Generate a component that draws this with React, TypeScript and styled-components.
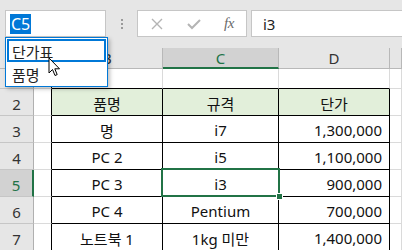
import styled, { createGlobalStyle, css } from 'styled-components';

const GlobalStyle = createGlobalStyle`
  html, body {
    margin: 0;
    padding: 0;
    background: #fff;
  }
  body {
    font-family: "Noto Sans", "Noto Sans CJK KR", sans-serif;
  }
`;

const Screen = styled.div`
  position: relative;
  width: 402px;
  height: 250px;
  overflow: hidden;
  background: #fff;
`;

const FormulaBar = styled.div`
  height: 48px;
  box-sizing: border-box;
  padding: 10px 0 0 5px;
  background: #e6e6e6;
  display: flex;
  align-items: flex-start;
`;

const NameBox = styled.div`
  width: 101px;
  height: 27px;
  box-sizing: border-box;
  border: 1px solid #c6c6c6;
  background: #fff;
  display: flex;
  align-items: center;
  padding-left: 4px;
`;

const Selected = styled.span`
  background: #0078d7;
  color: #fff;
  font-size: 16px;
  line-height: 20px;
  padding: 0 1px;
`;

const Grip = styled.div`
  width: 31px;
  height: 27px;
  display: flex;
  flex-direction: column;
  align-items: center;
  justify-content: center;
  gap: 2px;
  & span {
    width: 2px;
    height: 2px;
    background: #9a9a9a;
  }
`;

const FuncBox = styled.div`
  width: 110px;
  height: 27px;
  box-sizing: border-box;
  border: 1px solid #c6c6c6;
  background: #fff;
  display: flex;
  align-items: center;
`;

const FuncButton = styled.div<{ $w: number }>`
  width: ${(p) => p.$w}px;
  height: 100%;
  display: flex;
  align-items: center;
  justify-content: center;
`;

const Fx = styled.span`
  font-family: "Liberation Serif", serif;
  font-style: italic;
  font-size: 15px;
  color: #6a6a6a;
  letter-spacing: -0.5px;
`;

const FormulaInput = styled.div`
  flex: 1;
  height: 27px;
  margin-left: 4px;
  box-sizing: border-box;
  border: 1px solid #c6c6c6;
  border-right: none;
  background: #fff;
  display: flex;
  align-items: center;
  padding-left: 11px;
  font-size: 15px;
  color: #222;
`;

const Sheet = styled.div`
  display: grid;
  grid-template-columns: 34px 18px 111px 116px 111px 1fr;
  grid-template-rows: 21px 20px repeat(6, 27px);
`;

const ColHead = styled.div<{ $active?: boolean }>`
  box-sizing: border-box;
  background: ${(p) => (p.$active ? '#d2d2d2' : '#e6e6e6')};
  border-right: 1px solid #b8b8b8;
  border-bottom: ${(p) => (p.$active ? '2px solid #217346' : '1px solid #b8b8b8')};
  color: ${(p) => (p.$active ? '#217346' : '#333')};
  font-size: 15px;
  display: flex;
  align-items: center;
  justify-content: center;
  padding-top: ${(p) => (p.$active ? 1 : 0)}px;
`;

const RowHead = styled.div<{ $active?: boolean }>`
  box-sizing: border-box;
  background: ${(p) => (p.$active ? '#d2d2d2' : '#e6e6e6')};
  border-right: ${(p) => (p.$active ? '2px solid #217346' : '1px solid #b0b0b0')};
  border-bottom: 1px solid #c6c6c6;
  color: ${(p) => (p.$active ? '#217346' : '#333')};
  font-size: 15px;
  display: flex;
  align-items: center;
  justify-content: center;
  padding-top: 3px;
`;

type Align = 'left' | 'center' | 'right';

const Cell = styled.div<{
  $align?: Align;
  $head?: boolean;
  $right?: boolean;
  $bottom?: boolean;
}>`
  position: relative;
  box-sizing: border-box;
  background: ${(p) => (p.$head ? '#e2efda' : '#fff')};
  border-right: 1px solid ${(p) => (p.$right ? '#000' : '#dadada')};
  border-bottom: 1px solid ${(p) => (p.$bottom ? '#000' : '#dadada')};
  font-size: 15px;
  color: #111;
  display: flex;
  align-items: center;
  padding-top: 2px;
  white-space: nowrap;
  ${(p) =>
    p.$align === 'center' &&
    css`
      justify-content: center;
    `}
  ${(p) =>
    p.$align === 'right' &&
    css`
      justify-content: flex-end;
      padding-right: 7px;
    `}
`;

const Selection = styled.div`
  position: absolute;
  z-index: 2;
  top: -2px;
  left: -2px;
  right: -2px;
  bottom: -1px;
  border: 2px solid #217346;
  pointer-events: none;
  &::after {
    content: '';
    position: absolute;
    right: -5px;
    bottom: -5px;
    width: 5px;
    height: 5px;
    background: #217346;
    border: 1px solid #fff;
  }
`;

const Dropdown = styled.div`
  position: absolute;
  z-index: 5;
  left: 5px;
  top: 37px;
  width: 103px;
  height: 50px;
  box-sizing: border-box;
  border: 1px solid #0078d7;
  background: #fff;
  box-shadow: 2px 2px 4px rgba(0, 0, 0, 0.25);
  padding: 1px;
`;

const Option = styled.div<{ $hover?: boolean }>`
  height: 23px;
  box-sizing: border-box;
  border: 2px solid ${(p) => (p.$hover ? '#0078d7' : 'transparent')};
  font-size: 15px;
  color: #222;
  display: flex;
  align-items: center;
  padding-left: 3px;
  padding-top: 1px;
`;

const Pointer = styled.svg`
  position: absolute;
  z-index: 6;
  left: 48px;
  top: 57px;
`;

const rows: [string, string, string][] = [
  ['품명', '규격', '단가'],
  ['명', 'i7', '1,300,000'],
  ['PC 2', 'i5', '1,100,000'],
  ['PC 3', 'i3', '900,000'],
  ['PC 4', 'Pentium', '700,000'],
  ['노트북 1', '1kg 미만', '1,400,000'],
];

export default function App() {
  return (
    <Screen>
      <GlobalStyle />
      <FormulaBar>
        <NameBox>
          <Selected>C5</Selected>
        </NameBox>
        <Grip>
          <span />
          <span />
          <span />
        </Grip>
        <FuncBox>
          <FuncButton $w={38}>
            <svg width="12" height="12" viewBox="0 0 12 12">
              <path d="M1 1 L11 11 M11 1 L1 11" stroke="#b4b4b4" strokeWidth="1.4" />
            </svg>
          </FuncButton>
          <FuncButton $w={36}>
            <svg width="14" height="12" viewBox="0 0 14 12">
              <path d="M1 6 L5 10 L13 2" stroke="#b4b4b4" strokeWidth="2" fill="none" />
            </svg>
          </FuncButton>
          <FuncButton $w={34}>
            <Fx>fx</Fx>
          </FuncButton>
        </FuncBox>
        <FormulaInput>i3</FormulaInput>
      </FormulaBar>

      <Sheet>
        <ColHead />
        <ColHead>A</ColHead>
        <ColHead>B</ColHead>
        <ColHead $active>C</ColHead>
        <ColHead>D</ColHead>
        <ColHead />

        <RowHead>1</RowHead>
        <Cell $right />
        <Cell $bottom />
        <Cell $bottom />
        <Cell $bottom />
        <Cell />

        {rows.map((r, i) => {
          const n = i + 2;
          return [
            <RowHead key={`h${n}`} $active={n === 5}>
              {n}
            </RowHead>,
            <Cell key={`a${n}`} $right />,
            <Cell key={`b${n}`} $align="center" $head={i === 0} $right $bottom>
              {r[0]}
            </Cell>,
            <Cell key={`c${n}`} $align="center" $head={i === 0} $right $bottom>
              {r[1]}
              {n === 5 && <Selection />}
            </Cell>,
            <Cell key={`d${n}`} $align={i === 0 ? 'center' : 'right'} $head={i === 0} $right $bottom>
              {r[2]}
            </Cell>,
            <Cell key={`e${n}`} />,
          ];
        })}
      </Sheet>

      <Dropdown>
        <Option $hover>단가표</Option>
        <Option>품명</Option>
      </Dropdown>

      <Pointer width="13" height="21" viewBox="0 0 13 21">
        <path
          d="M1 1 L1 16 L4.5 12.5 L7 18.5 L9.2 17.6 L6.8 11.8 L11.5 11.8 Z"
          fill="#fff"
          stroke="#000"
          strokeWidth="1"
          strokeLinejoin="round"
        />
      </Pointer>
    </Screen>
  );
}
